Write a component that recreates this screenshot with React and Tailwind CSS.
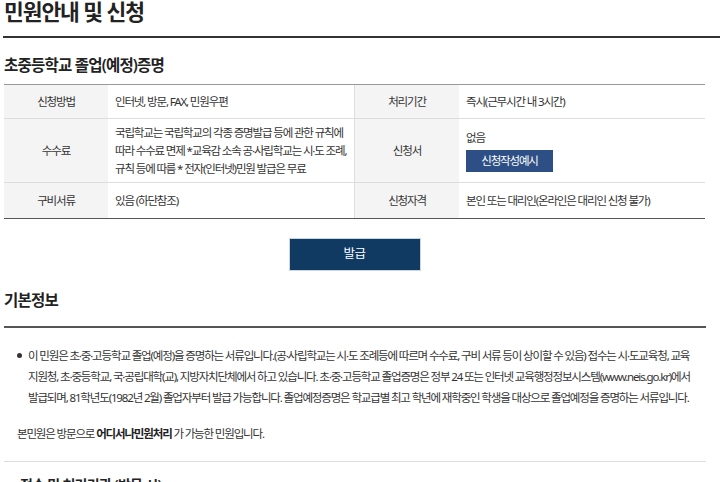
export default function App() {
  const font = { fontFamily: '"Noto Sans", "Noto Sans CJK KR", sans-serif' };
  return (
    <div className="w-[720px] h-[482px] overflow-hidden bg-white text-[#333]" style={font}>
      <div className="pl-[4px]">
        <h1 className="text-[21.5px] font-bold leading-[24px] tracking-[-0.05em] text-[#222] h-[36px]">민원안내 및 신청</h1>
      </div>
      <div className="ml-[3px] h-[2px] bg-[#333]"></div>
      <div className="pl-[4px] w-[709px]">
        <h2 className="mt-[17px] text-[15.5px] font-semibold leading-[20px] tracking-[-0.05em] text-[#222]">초중등학교 졸업(예정)증명</h2>
        <div className="mt-[9px] w-[701px] border-t border-[#999] border-b border-b-[#555] text-[11.5px] tracking-[-0.1em] leading-[18px]">
          <div className="grid grid-cols-[104px_246px_105px_246px] h-[34px] border-b border-[#ddd]">
            <div className="bg-[#f4f4f4] flex items-center justify-center">신청방법</div>
            <div className="flex items-center pl-[7px]">인터넷, 방문, FAX, 민원우편</div>
            <div className="bg-[#f4f4f4] flex items-center justify-center border-l border-[#ddd]">처리기간</div>
            <div className="flex items-center pl-[7px]">즉시(근무시간 내 3시간)</div>
          </div>
          <div className="grid grid-cols-[104px_246px_105px_246px] h-[64px] border-b border-[#ddd]">
            <div className="bg-[#f4f4f4] flex items-center justify-center">수수료</div>
            <div className="flex items-center pl-[7px] pr-[4px]">
              <p>국립학교는 국립학교의 각종 증명발급 등에 관한 규칙에 따라 수수료 면제 *교육감 소속 공·사립학교는 시·도 조례, 규칙 등에 따름 * 전자(인터넷)민원 발급은 무료</p>
            </div>
            <div className="bg-[#f4f4f4] flex items-center justify-center border-l border-[#ddd]">신청서</div>
            <div className="flex flex-col justify-center pl-[7px] pt-[1px]">
              <span className="leading-[16px]">없음</span>
              <span className="mt-[4px] w-[87px] h-[22px] bg-[#2d4f85] text-white flex items-center justify-center">신청작성예시</span>
            </div>
          </div>
          <div className="grid grid-cols-[104px_246px_105px_246px] h-[35px]">
            <div className="bg-[#f4f4f4] flex items-center justify-center">구비서류</div>
            <div className="flex items-center pl-[7px]">있음 (하단참조)</div>
            <div className="bg-[#f4f4f4] flex items-center justify-center border-l border-[#ddd]">신청자격</div>
            <div className="flex items-center pl-[7px]">본인 또는 대리인(온라인은 대리인 신청 불가)</div>
          </div>
        </div>
        <div className="flex justify-center w-[701px] mt-[19px]">
          <button className="w-[132px] h-[33px] bg-[#113a63] border border-[#c9d6e3] text-white text-[12.5px] tracking-[-0.05em]">발급</button>
        </div>
        <h2 className="mt-[19px] text-[15.5px] font-semibold leading-[20px] tracking-[-0.05em] text-[#222]">기본정보</h2>
        <div className="mt-[16px] w-[702px] h-[2px] bg-[#555]"></div>
        <div className="pl-[13px] pt-[17px] text-[11.5px] leading-[21px] tracking-[-0.1em] text-[#333]">
          <div className="flex">
            <span className="w-[11px] shrink-0 flex pt-[8px]"><span className="w-[5px] h-[5px] rounded-full bg-[#333]"></span></span>
            <p className="w-[662px]">이 민원은 초·중·고등학교 졸업(예정)을 증명하는 서류입니다.(공·사립학교는 시·도 조례등에 따르며 수수료, 구비 서류 등이 상이할 수 있음) 접수는 시·도교육청, 교육지원청, 초·중등학교, 국·공립대학(교), 지방자치단체에서 하고 있습니다. 초·중·고등학교 졸업증명은 정부 24 또는 인터넷 교육행정정보시스템(www.neis.go.kr)에서 발급되며, 81학년도(1982년 2월) 졸업자부터 발급 가능합니다. 졸업예정증명은 학교급별 최고 학년에 재학중인 학생을 대상으로 졸업예정을 증명하는 서류입니다.</p>
          </div>
          <p className="mt-[15px]">본민원은 방문으로 <b className="font-bold text-[#222]">어디서나민원처리</b> 가 가능한 민원입니다.</p>
        </div>
        <div className="mt-[17px] w-[702px] h-[1px] bg-[#ddd]"></div>
        <h3 className="mt-[13px] pl-[16px] text-[14px] font-semibold leading-[20px] tracking-[-0.05em] text-[#222]">접수 및 처리기관 (방문 시)</h3>
      </div>
    </div>
  );
}
